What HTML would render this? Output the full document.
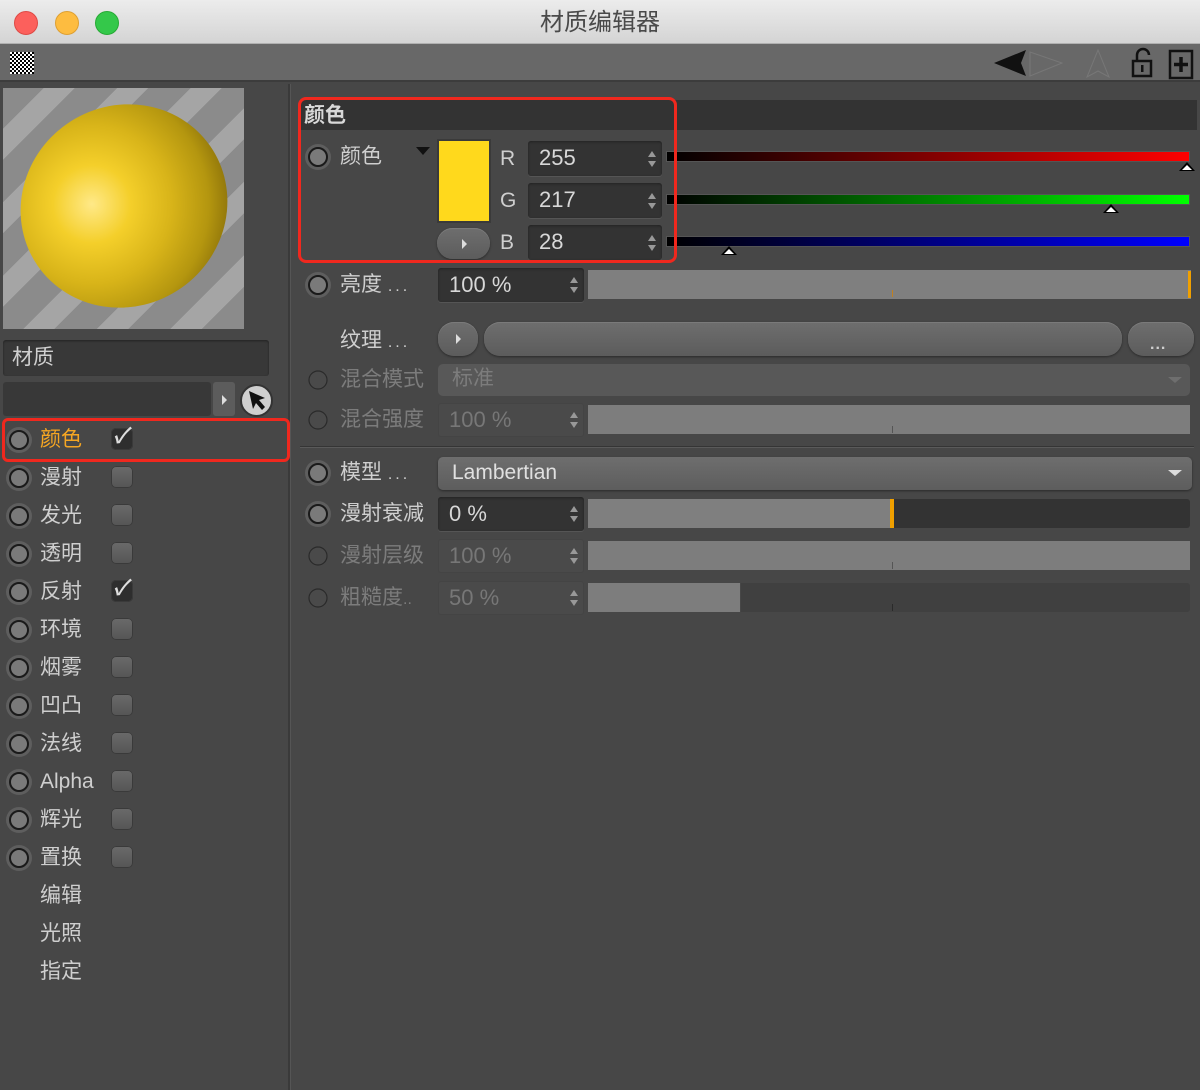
<!DOCTYPE html>
<html><head><meta charset="utf-8"><style>
*{margin:0;padding:0;box-sizing:border-box}
body{width:1200px;height:1090px;background:#474747;position:relative;overflow:hidden;font-family:"Liberation Sans","Noto Sans CJK SC",sans-serif;color:#cfcfcf}
.a{position:absolute}
.t{position:absolute;font-size:21px;line-height:26px;white-space:nowrap}
.dim{color:#7c7c7c}
.rad{position:absolute;width:26px;height:26px}
.cb{position:absolute;width:22px;height:22px;border-radius:5px;background:linear-gradient(#6a6a6a,#555);box-shadow:inset 0 0 0 1px #3a3a3a}
.inp{position:absolute;background:#333;border-radius:3px;box-shadow:inset 0 1px 2px #222,0 1px 0 #555;font-size:22px;line-height:34px;padding-left:11px;color:#d8d8d8}
.inp.dm{background:#4a4a4a;color:#777;box-shadow:inset 0 0 0 1px #444}
.arr{position:absolute;right:6px;top:50%;margin-top:-8px;width:8px;height:16px}
.arr::before{content:"";position:absolute;left:0;top:0;border:4px solid transparent;border-bottom:6px solid #999;border-top:0}
.arr::after{content:"";position:absolute;left:0;bottom:0;border:4px solid transparent;border-top:6px solid #999;border-bottom:0}
.bar{position:absolute;background:#7f7f7f}
.mk{position:absolute;width:0;height:0;border-left:8px solid transparent;border-right:8px solid transparent;border-bottom:9px solid #000}
.mk::after{content:"";position:absolute;left:-5px;top:3px;border-left:5px solid transparent;border-right:5px solid transparent;border-bottom:5px solid #fff}
.pill{position:absolute;border-radius:16px;background:linear-gradient(#6e6e6e,#5c5c5c);box-shadow:0 1px 2px #2a2a2a,inset 0 1px 0 #7a7a7a}
.play{position:absolute;width:0;height:0;border-top:5px solid transparent;border-bottom:5px solid transparent;border-left:5px solid #ddd}
</style></head><body>
<svg width="0" height="0" style="position:absolute"><defs>
<g id="r"><circle cx="13" cy="13" r="13" fill="#5e5e5e"/><circle cx="13" cy="13" r="9" fill="#7a7a7a" stroke="#1a1a1a" stroke-width="2"/></g>
<g id="rd"><circle cx="13" cy="13" r="9" fill="#4a4a4a" stroke="#2a2a2a" stroke-width="1.2"/></g>
</defs></svg>
<!-- title bar -->
<div class="a" style="left:0;top:0;width:1200px;height:44px;background:linear-gradient(#ececec,#d4d4d4);border-bottom:1px solid #b0b0b0"></div>
<div class="a" style="left:14px;top:11px;width:24px;height:24px;border-radius:50%;background:#fc605c;border:1px solid #de4a45"></div>
<div class="a" style="left:55px;top:11px;width:24px;height:24px;border-radius:50%;background:#fdbc40;border:1px solid #dea032"></div>
<div class="a" style="left:95px;top:11px;width:24px;height:24px;border-radius:50%;background:#34c84a;border:1px solid #27aa35"></div>
<div class="t" style="left:0;width:1200px;text-align:center;top:8px;font-size:24px;line-height:30px;color:#4a4a4a">材质编辑器</div>
<!-- toolbar -->
<div class="a" style="left:0;top:44px;width:1200px;height:38px;background:#686868;border-bottom:2px solid #3c3c3c"></div>
<div class="a" style="left:10px;top:52px;width:24px;height:22px;background:repeating-conic-gradient(#000 0 25%,#fff 0 50%) 0 0/4px 4px"></div>
<svg class="a" style="left:990px;top:44px" width="210" height="38">
<polygon points="4,19 36,6 31,19 36,32" fill="#111"/>
<polygon points="40,8 72,19 40,32" fill="none" stroke="#777" stroke-width="1"/>
<polygon points="108,6 97,33 108,27 119,33" fill="none" stroke="#777" stroke-width="1"/>
<path d="M147 17v-6a6 6 0 0 1 12 0" fill="none" stroke="#111" stroke-width="2.5"/>
<rect x="143" y="17" width="18" height="15" fill="none" stroke="#111" stroke-width="2.5"/>
<rect x="151" y="21" width="2.5" height="7" fill="#111"/>
<rect x="180" y="7" width="22" height="27" fill="none" stroke="#111" stroke-width="2.5"/>
<path d="M191 13v15M184 20.5h14" stroke="#111" stroke-width="3.5"/>
</svg>
<!-- left panel -->
<div class="a" style="left:288px;top:84px;width:3px;height:1006px;background:#3a3a3a;border-right:1px solid #555"></div>
<div class="a" style="left:3px;top:88px;width:241px;height:241px;overflow:hidden;background:repeating-linear-gradient(-45deg,#8b8b8b 0 30px,#a5a5a5 30px 52px)">
<div class="a" style="left:16px;top:18px;width:210px;height:200px;border-radius:50%;transform:rotate(-35deg);background:radial-gradient(circle at 38% 40%,#ffe988 0,#f4cf2a 22%,#d8b419 45%,#b4960f 66%,#8a700a 80%,#3a3005 92%,#000 100%)"></div>
</div>
<div class="a" style="left:3px;top:340px;width:266px;height:36px;background:#383838;border-radius:3px;box-shadow:inset 0 1px 2px #222"></div>
<div class="t" style="left:12px;top:345px">材质</div>
<div class="a" style="left:3px;top:382px;width:208px;height:34px;background:#383838;border-radius:3px"></div>
<div class="a" style="left:213px;top:382px;width:22px;height:34px;background:#5c5c5c;border-radius:3px"></div>
<div class="play" style="left:222px;top:395px"></div>
<div class="a" style="left:240px;top:384px;width:33px;height:33px;border-radius:50%;background:#cfcfcf;border:2px solid #333"></div>
<svg class="a" style="left:246px;top:389px" width="24" height="24"><path d="M3 2l16 7-6 2 6 7-3 3-6-7-3 6z" fill="#111"/></svg>
<div class="a" style="left:2px;top:418px;width:288px;height:44px;border:3px solid #f0281e;border-radius:6px"></div>
<svg class="rad" style="left:6px;top:427px"><use href="#r"/></svg><div class="t" style="left:40px;top:427px;color:#f5a623">颜色</div>
<div class="cb" style="left:111px;top:428px;background:#2e2e2e"></div><div class="t" style="left:113px;top:424px;color:#ddd;font-style:italic;font-weight:bold">✓</div>

<svg class="rad" style="left:6px;top:465px"><use href="#r"/></svg><div class="t" style="left:40px;top:465px">漫射</div><div class="cb" style="left:111px;top:466px"></div>
<svg class="rad" style="left:6px;top:503px"><use href="#r"/></svg><div class="t" style="left:40px;top:503px">发光</div><div class="cb" style="left:111px;top:504px"></div>
<svg class="rad" style="left:6px;top:541px"><use href="#r"/></svg><div class="t" style="left:40px;top:541px">透明</div><div class="cb" style="left:111px;top:542px"></div>
<svg class="rad" style="left:6px;top:579px"><use href="#r"/></svg><div class="t" style="left:40px;top:579px">反射</div><div class="cb" style="left:111px;top:580px;background:#2e2e2e"></div><div class="t" style="left:113px;top:576px;color:#ddd;font-style:italic;font-weight:bold">✓</div>
<svg class="rad" style="left:6px;top:617px"><use href="#r"/></svg><div class="t" style="left:40px;top:617px">环境</div><div class="cb" style="left:111px;top:618px"></div>
<svg class="rad" style="left:6px;top:655px"><use href="#r"/></svg><div class="t" style="left:40px;top:655px">烟雾</div><div class="cb" style="left:111px;top:656px"></div>
<svg class="rad" style="left:6px;top:693px"><use href="#r"/></svg><div class="t" style="left:40px;top:693px">凹凸</div><div class="cb" style="left:111px;top:694px"></div>
<svg class="rad" style="left:6px;top:731px"><use href="#r"/></svg><div class="t" style="left:40px;top:731px">法线</div><div class="cb" style="left:111px;top:732px"></div>
<svg class="rad" style="left:6px;top:769px"><use href="#r"/></svg><div class="t" style="left:40px;top:769px">Alpha</div><div class="cb" style="left:111px;top:770px"></div>
<svg class="rad" style="left:6px;top:807px"><use href="#r"/></svg><div class="t" style="left:40px;top:807px">辉光</div><div class="cb" style="left:111px;top:808px"></div>
<svg class="rad" style="left:6px;top:845px"><use href="#r"/></svg><div class="t" style="left:40px;top:845px">置换</div><div class="cb" style="left:111px;top:846px"></div>
<div class="t" style="left:40px;top:883px">编辑</div>
<div class="t" style="left:40px;top:921px">光照</div>
<div class="t" style="left:40px;top:959px">指定</div>

<!-- right panel -->
<div class="a" style="left:301px;top:100px;width:896px;height:30px;background:#333"></div>
<div class="t" style="left:304px;top:103px;font-weight:bold;color:#d8d8d8">颜色</div>
<svg class="rad" style="left:305px;top:144px"><use href="#r"/></svg><div class="t" style="left:340px;top:144px">颜色</div>
<div class="a" style="left:416px;top:147px;border-left:7px solid transparent;border-right:7px solid transparent;border-top:8px solid #111"></div>
<div class="a" style="left:437px;top:139px;width:54px;height:84px;background:#ffd91c;border:2px solid #3a3a3a"></div>
<div class="pill" style="left:437px;top:228px;width:53px;height:31px"></div><div class="play" style="left:462px;top:239px"></div>
<div class="t" style="left:500px;top:146px">R</div><div class="t" style="left:500px;top:188px">G</div><div class="t" style="left:500px;top:230px">B</div>
<div class="inp" style="left:528px;top:141px;width:134px;height:35px">255<span class="arr"></span></div>
<div class="inp" style="left:528px;top:183px;width:134px;height:35px">217<span class="arr"></span></div>
<div class="inp" style="left:528px;top:225px;width:134px;height:35px">28<span class="arr"></span></div>
<div class="a" style="left:666px;top:151px;width:524px;height:11px;background:linear-gradient(90deg,#000,#ff0000);border:1px solid #555"></div>
<div class="a" style="left:666px;top:194px;width:524px;height:11px;background:linear-gradient(90deg,#000,#00ff00);border:1px solid #555"></div>
<div class="a" style="left:666px;top:236px;width:524px;height:11px;background:linear-gradient(90deg,#000,#0000ff);border:1px solid #555"></div>
<div class="mk" style="left:1179px;top:162px"></div>
<div class="mk" style="left:1103px;top:204px"></div>
<div class="mk" style="left:721px;top:246px"></div>
<div class="a" style="left:298px;top:97px;width:379px;height:166px;border:3px solid #f0281e;border-radius:8px"></div>

<svg class="rad" style="left:305px;top:272px"><use href="#r"/></svg><div class="t" style="left:340px;top:272px">亮度 <span style="font-size:16px;letter-spacing:3px">...</span></div>
<div class="inp" style="left:438px;top:268px;width:146px;height:34px">100 %<span class="arr"></span></div>
<div class="bar" style="left:588px;top:270px;width:603px;height:29px"></div>
<div class="a" style="left:1188px;top:271px;width:3px;height:27px;background:#f0a000"></div>
<div class="a" style="left:892px;top:290px;width:1px;height:7px;background:#c08020"></div>

<div class="t" style="left:340px;top:328px">纹理 <span style="font-size:16px;letter-spacing:3px">...</span></div>
<div class="pill" style="left:438px;top:322px;width:40px;height:34px"></div><div class="play" style="left:456px;top:334px"></div>
<div class="pill" style="left:484px;top:322px;width:638px;height:34px"></div>
<div class="pill" style="left:1128px;top:322px;width:66px;height:34px"></div>
<div class="t" style="left:1150px;top:332px;font-size:16px;letter-spacing:1px;font-weight:bold">...</div>

<svg class="rad" style="left:305px;top:367px"><use href="#rd"/></svg><div class="t dim" style="left:340px;top:367px">混合模式</div>
<div class="a" style="left:438px;top:364px;width:752px;height:32px;background:#585858;border-radius:5px"></div>
<div class="t dim" style="left:452px;top:366px">标准</div>
<div class="a" style="left:1168px;top:377px;border-left:7px solid transparent;border-right:7px solid transparent;border-top:6px solid #6e6e6e"></div>

<svg class="rad" style="left:305px;top:407px"><use href="#rd"/></svg><div class="t dim" style="left:340px;top:407px">混合强度</div>
<div class="inp dm" style="left:438px;top:403px;width:146px;height:34px">100 %<span class="arr"></span></div>
<div class="bar" style="left:588px;top:405px;width:602px;height:29px;background:#7d7d7d"></div>
<div class="a" style="left:892px;top:426px;width:1px;height:7px;background:#555"></div>

<div class="a" style="left:300px;top:446px;width:894px;height:2px;background:#353535;border-bottom:1px solid #5a5a5a"></div>

<svg class="rad" style="left:305px;top:460px"><use href="#r"/></svg><div class="t" style="left:340px;top:460px">模型 <span style="font-size:16px;letter-spacing:3px">...</span></div>
<div class="a" style="left:438px;top:457px;width:754px;height:33px;background:linear-gradient(#6e6e6e,#5d5d5d);border-radius:5px;box-shadow:0 1px 2px #2a2a2a"></div>
<div class="t" style="left:452px;top:460px;color:#e0e0e0">Lambertian</div>
<div class="a" style="left:1168px;top:470px;border-left:7px solid transparent;border-right:7px solid transparent;border-top:6px solid #ddd"></div>

<svg class="rad" style="left:305px;top:501px"><use href="#r"/></svg><div class="t" style="left:340px;top:501px">漫射衰减</div>
<div class="inp" style="left:438px;top:497px;width:146px;height:34px">0 %<span class="arr"></span></div>
<div class="bar" style="left:588px;top:499px;width:304px;height:29px"></div>
<div class="a" style="left:892px;top:499px;width:298px;height:29px;background:#333;border-radius:0 3px 3px 0"></div>
<div class="a" style="left:890px;top:499px;width:4px;height:29px;background:#f0a000"></div>

<svg class="rad" style="left:305px;top:543px"><use href="#rd"/></svg><div class="t dim" style="left:340px;top:543px">漫射层级</div>
<div class="inp dm" style="left:438px;top:539px;width:146px;height:34px">100 %<span class="arr"></span></div>
<div class="bar" style="left:588px;top:541px;width:602px;height:29px;background:#7d7d7d"></div>
<div class="a" style="left:892px;top:562px;width:1px;height:7px;background:#555"></div>

<svg class="rad" style="left:305px;top:585px"><use href="#rd"/></svg><div class="t dim" style="left:340px;top:585px">粗糙度<span style="font-size:16px">..</span></div>
<div class="inp dm" style="left:438px;top:581px;width:146px;height:34px">50 %<span class="arr"></span></div>
<div class="bar" style="left:588px;top:583px;width:152px;height:29px;background:#7d7d7d"></div>
<div class="a" style="left:741px;top:583px;width:449px;height:29px;background:#404040;border-radius:0 3px 3px 0"></div>
<div class="a" style="left:892px;top:604px;width:1px;height:7px;background:#2a2a2a"></div>
</body></html>
